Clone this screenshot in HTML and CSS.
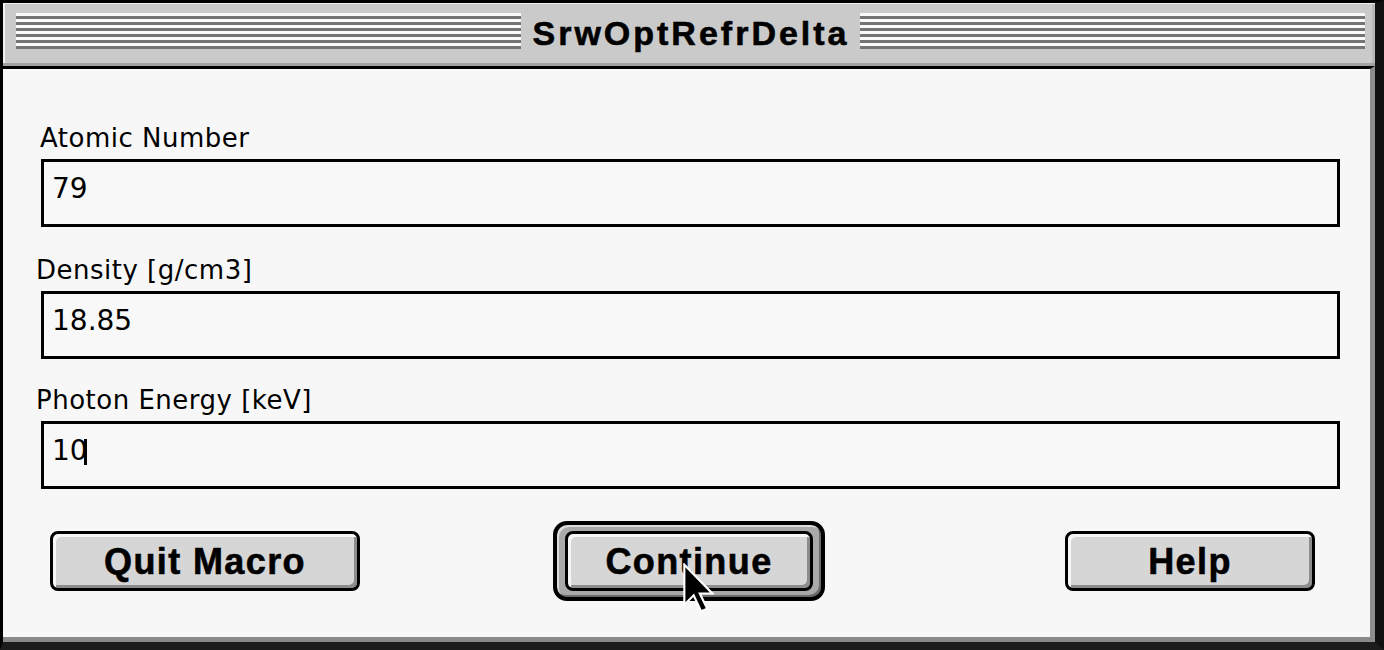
FILE: index.html
```html
<!DOCTYPE html>
<html>
<head>
<meta charset="utf-8">
<title>SrwOptRefrDelta</title>
<link rel="stylesheet" href="styles.css">
</head>
<body>
<div class="window">
  <div class="titlebar">
    <div class="stripes"></div>
    <div class="title">SrwOptRefrDelta</div>
    <div class="stripes"></div>
  </div>
  <div class="content">
    <div class="field field-a">
      <div class="label label-first">Atomic Number</div>
      <div class="box"><span class="value">79</span></div>
    </div>
    <div class="field field-b">
      <div class="label">Density [g/cm3]</div>
      <div class="box"><span class="value">18.85</span></div>
    </div>
    <div class="field field-c">
      <div class="label">Photon Energy [keV]</div>
      <div class="box"><span class="value">10</span><span class="caret"></span></div>
    </div>
    <div class="buttons">
      <div class="btn btn-quit">Quit Macro</div>
      <div class="ring"><div class="btn btn-continue">Continue</div></div>
      <div class="btn btn-help">Help</div>
    </div>
    <svg class="pointer" width="32" height="50" viewBox="-0.5 -0.5 12 18.5">
      <polygon points="0,0 0,15 3.5,11.5 6.3,17.5 8.6,16.5 5.8,10.8 10.5,10.8" fill="#000" stroke="#fff" stroke-width="0.8" stroke-linejoin="miter"/>
    </svg>
  </div>
</div>
</body>
</html>
```

FILE: styles.css
```css
html, body {
  margin: 0;
  padding: 0;
  background: #000;
}

.window {
  width: 1384px;
  height: 650px;
  box-sizing: border-box;
  border-top: 3px solid #000;
  border-left: 3px solid #000;
  border-right: 9px solid #111;
  border-bottom: 8px solid #1c1c1c;
  background: #f7f7f7;
  display: flex;
  flex-direction: column;
  overflow: hidden;
}

.titlebar {
  height: 60px;
  flex: none;
  background: #cacaca;
  border-bottom: 3px solid #a2a2a2;
  box-shadow: inset 2px 1px 0 #f0f0f0, inset -3px 0 0 #b8b8b8;
  display: flex;
  align-items: flex-start;
  padding: 0 10px 0 13px;
}

.stripes {
  flex: 1;
  height: 36px;
  margin-top: 10px;
  background: repeating-linear-gradient(to bottom, #fafafa 0, #fafafa 3px, #747474 3px, #747474 6px);
}

.title {
  margin-top: 10px;
  padding: 0 10px 0 11px;
  font-family: "Liberation Sans", Arial, sans-serif;
  font-weight: bold;
  font-size: 34px;
  line-height: 40px;
  letter-spacing: 3px;
  color: #000;
  white-space: nowrap;
  -webkit-text-stroke: 0.6px #000;
}

.content {
  flex: 1;
  position: relative;
  border-top: 3px solid #000;
  border-right: 5px solid #8e8e8e;
  border-bottom: 5px solid #8a8a8a;
  background: #f7f7f7;
  padding: 54px 0 0 33px;
  font-family: "DejaVu Sans", Verdana, sans-serif;
  color: #000;
}

.field-a {
  margin-bottom: 28px;
}

.field-b {
  margin-bottom: 26px;
}

.field-c {
  margin-bottom: 0;
}

.label {
  font-size: 26px;
  line-height: 30px;
  letter-spacing: 0.5px;
  padding-left: 0;
}

.label-first {
  padding-left: 4px;
}

.box {
  margin: 6px 0 0 5px;
  width: 1299px;
  height: 68px;
  box-sizing: border-box;
  border: 3px solid #000;
  background: #f8f8f8;
  padding: 11px 0 0 8px;
  display: flex;
  align-items: flex-start;
}

.value {
  font-size: 28px;
  line-height: 32px;
}

.caret {
  display: inline-block;
  width: 3px;
  height: 26px;
  margin: 4px 0 0 -4px;
  background: #000;
}

.buttons {
  display: flex;
  align-items: center;
  padding-left: 14px;
  margin-top: 32px;
}

.btn {
  box-sizing: border-box;
  height: 60px;
  border: 3px solid #000;
  border-radius: 8px;
  background: #d6d6d6;
  box-shadow: inset 3px 3px 0 #f6f6f6, inset -3px -3px 0 #8c8c8c;
  display: flex;
  align-items: center;
  justify-content: center;
  font-family: "Liberation Sans", Arial, sans-serif;
  font-weight: bold;
  font-size: 36px;
  letter-spacing: 1.4px;
  padding-top: 2px;
  color: #000;
  -webkit-text-stroke: 0.6px #000;
}

.btn-quit {
  width: 310px;
}

.ring {
  margin-left: 193px;
  border: 4px solid #000;
  border-radius: 14px;
  padding: 6px 8px;
  background: #a9a9a9;
  box-shadow: inset 2px 2px 0 #dcdcdc, inset -2px -2px 0 #6a6a6a;
}

.btn-continue {
  width: 248px;
}

.btn-help {
  margin-left: 240px;
  width: 250px;
}

.pointer {
  position: absolute;
  left: 680px;
  top: 494px;
}
```
